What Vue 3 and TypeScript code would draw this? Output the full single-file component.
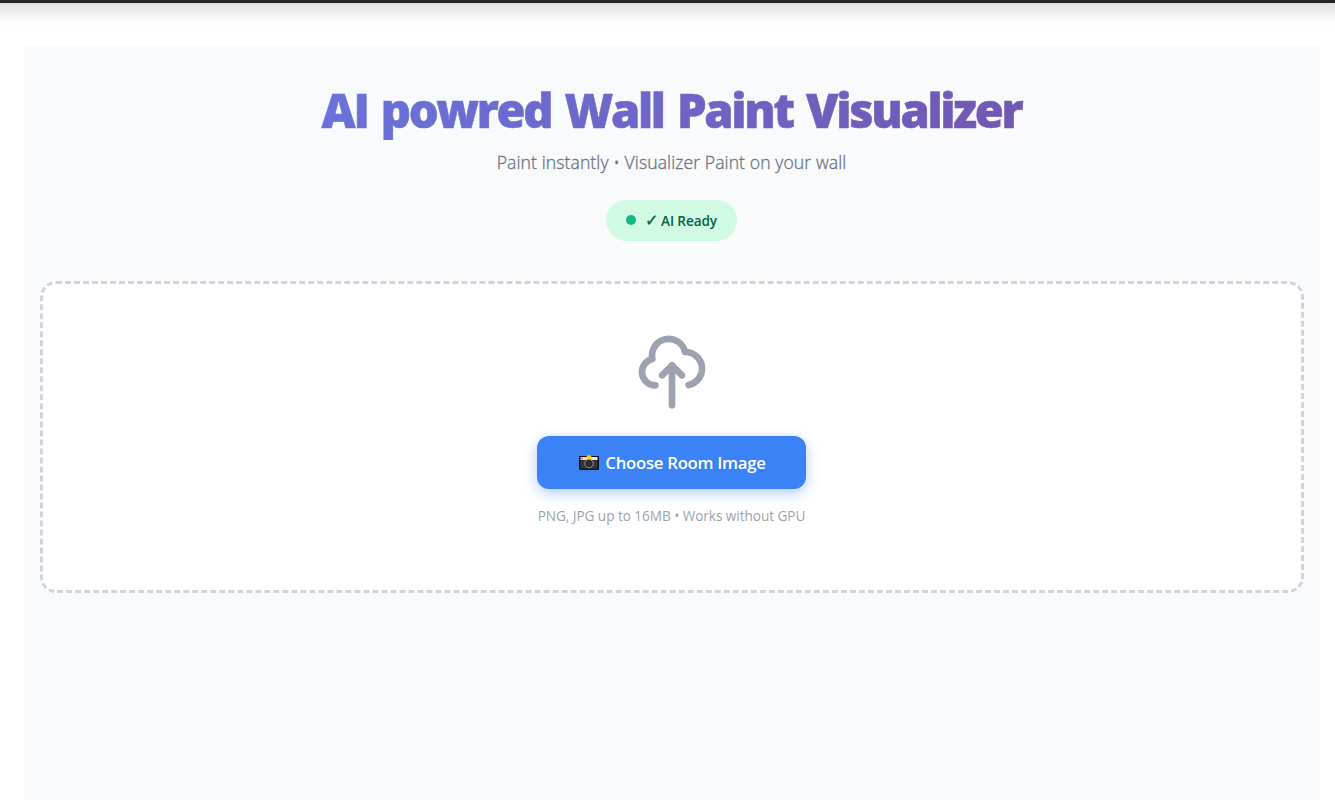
<script setup lang="ts">
const title: string = 'AI powred Wall Paint Visualizer'
const subtitle: string = 'Paint instantly • Visualizer Paint on your wall'
const status: string = 'AI Ready'
const hint: string = 'PNG, JPG up to 16MB • Works without GPU'
</script>

<template>
  <div class="page">
    <div class="navbar"></div>
    <main class="content">
      <header class="header">
        <h1>{{ title }}</h1>
        <p class="subtitle">{{ subtitle }}</p>
        <div class="status">
          <span class="dot"></span>
          <span class="status-text"><span class="check">✓</span><span>{{ status }}</span></span>
        </div>
      </header>
      <section class="upload">
        <svg class="cloud" viewBox="0 0 24 24" fill="none" stroke="currentColor" stroke-width="2" stroke-linecap="round" stroke-linejoin="round">
          <path d="M7 16a4 4 0 01-.88-7.903A5 5 0 1115.9 6L16 6a5 5 0 011 9.9M15 13l-3-3m0 0l-3 3m3-3v12" />
        </svg>
        <button class="choose" type="button">
          <svg class="camera" viewBox="0 0 20 16">
            <rect x="0" y="1" width="20" height="14" rx="1" fill="#101214" />
            <rect x="1.5" y="5.5" width="17" height="8" fill="#35383b" />
            <rect x="1.5" y="2" width="17" height="3" fill="#e5e7eb" />
            <path d="M7.5 4V1.5L9 .3h2l1.5 1.2V4z" fill="#f7d51d" />
            <rect x="2.2" y="2.8" width="1.6" height="1.4" fill="#ef2b2b" />
            <circle cx="10" cy="8.5" r="4.2" fill="#222426" stroke="#aeb1b4" stroke-width=".8" />
            <circle cx="10" cy="8.5" r="2.4" fill="#303235" />
          </svg>
          <span>Choose Room Image</span>
        </button>
        <p class="hint">{{ hint }}</p>
      </section>
    </main>
  </div>
</template>

<style>
body { background: #fff; overflow: hidden; }
</style>

<style scoped>
* { box-sizing: border-box; }
.page {
  height: 800px;
  overflow: hidden;
  display: flow-root;
  font-family: 'Segoe UI', 'Open Sans', 'Noto Sans', sans-serif;
}
.navbar {
  height: 60px;
  margin: -57px -12px 0 -30px;
  background: #212529;
  box-shadow: 0 8px 16px rgba(0, 0, 0, 0.15);
}
.content {
  margin: 44px 15px 0 24px;
  height: 753px;
  padding: 32px 16px;
  background: #f9fafc;
}
.header {
  display: flex;
  flex-direction: column;
  align-items: center;
  text-align: center;
  white-space: nowrap;
}
h1 {
  margin: 0;
  padding: 1px 1px 0 0;
  font-size: 47px;
  line-height: 60px;
  font-weight: 800;
  letter-spacing: -2.3px;
  word-spacing: 3.3px;
  -webkit-text-stroke: 0.6px transparent;
  background: linear-gradient(135deg, #667eea 0%, #764ba2 100%);
  background-clip: text;
  -webkit-background-clip: text;
  color: transparent;
  width: 100%;
}
.subtitle {
  margin: 6px 1px 0 0;
  font-size: 17.6px;
  line-height: 32px;
  font-weight: 300;
  letter-spacing: 0.09px;
  color: #6b7280;
  -webkit-text-stroke: 0.3px currentColor;
}
.status {
  display: flex;
  align-items: center;
  gap: 10px;
  width: 131px;
  height: 41px;
  margin: 22px 1px 0 0;
  padding: 0 20px 1px;
  border-radius: 21px;
  background: #d1fae5;
  color: #065f46;
  font-size: 13.6px;
  font-weight: 600;
  letter-spacing: -0.1px;
}
.dot { flex: none; width: 10px; height: 10px; border-radius: 50%; background: #10b981; }
.status-text { display: flex; align-items: center; gap: 4px; height: 20px; padding-top: 1px; }
.check {
  width: 11px;
  margin-left: -1px;
  margin-right: 1px;
  font-family: 'DejaVu Sans', sans-serif;
  font-size: 16px;
  -webkit-text-stroke: 0.35px currentColor;
}
.upload {
  display: flex;
  flex-direction: column;
  align-items: center;
  height: 312px;
  margin-top: 40px;
  padding-top: 48px;
  border: 3px dashed #d1d5db;
  border-radius: 16px;
  background: #fff;
}
.cloud { flex: none; width: 80px; height: 80px; color: #9ca3af; }
.choose {
  display: flex;
  align-items: center;
  justify-content: center;
  gap: 6px;
  width: 269px;
  height: 53px;
  margin: 24px 1px 0 0;
  padding: 0 0 0 2px;
  border: 0;
  border-radius: 12px;
  background: #3b82f6;
  box-shadow: 0 4px 14px rgba(59, 130, 246, 0.4);
  color: #fff;
  font-family: inherit;
  font-size: 16.8px;
  font-weight: 600;
  letter-spacing: -0.3px;
}
.camera { flex: none; width: 20px; height: 16px; }
.hint { margin: 15px 1px 0 0; font-size: 13.6px; line-height: 24px; letter-spacing: -0.05px; color: #9ca3af; }
</style>
